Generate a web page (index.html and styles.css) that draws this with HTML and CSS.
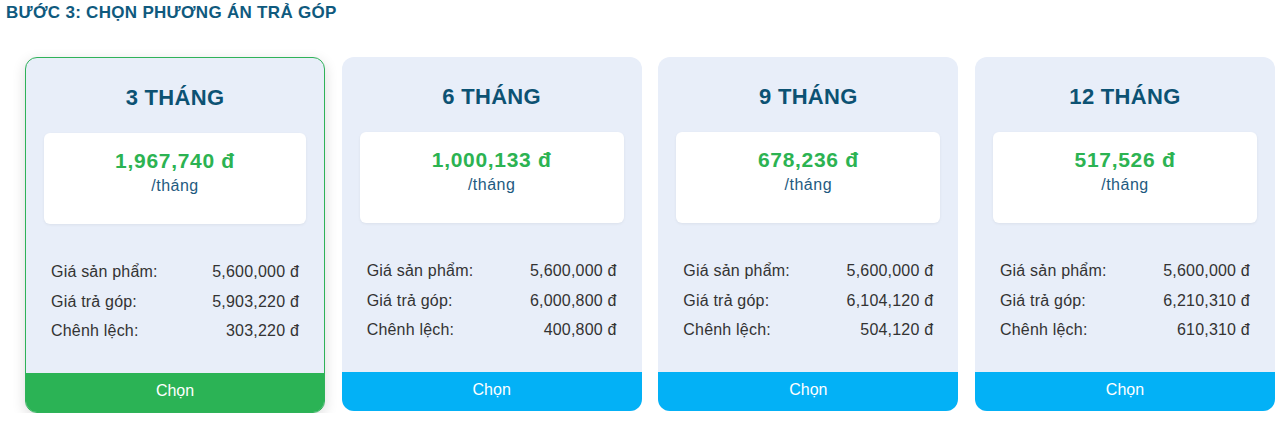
FILE: index.html
```html
<!DOCTYPE html>
<html lang="vi">
<head>
<meta charset="utf-8">
<link rel="stylesheet" href="styles.css">
</head>
<body>
<div class="page">
  <h2 class="step-title">BƯỚC 3: CHỌN PHƯƠNG ÁN TRẢ GÓP</h2>
  <div class="plans">
    <div class="plan plan--selected">
      <div class="plan-term">3 THÁNG</div>
      <div class="plan-price">
        <div class="price">1,967,740 đ</div>
        <div class="per">/tháng</div>
      </div>
      <div class="plan-rows">
        <div class="row"><span>Giá sản phẩm:</span><span>5,600,000 đ</span></div>
        <div class="row"><span>Giá trả góp:</span><span>5,903,220 đ</span></div>
        <div class="row"><span>Chênh lệch:</span><span>303,220 đ</span></div>
      </div>
      <div class="plan-btn">Chọn</div>
    </div>
    <div class="plan">
      <div class="plan-term">6 THÁNG</div>
      <div class="plan-price">
        <div class="price">1,000,133 đ</div>
        <div class="per">/tháng</div>
      </div>
      <div class="plan-rows">
        <div class="row"><span>Giá sản phẩm:</span><span>5,600,000 đ</span></div>
        <div class="row"><span>Giá trả góp:</span><span>6,000,800 đ</span></div>
        <div class="row"><span>Chênh lệch:</span><span>400,800 đ</span></div>
      </div>
      <div class="plan-btn">Chọn</div>
    </div>
    <div class="plan">
      <div class="plan-term">9 THÁNG</div>
      <div class="plan-price">
        <div class="price">678,236 đ</div>
        <div class="per">/tháng</div>
      </div>
      <div class="plan-rows">
        <div class="row"><span>Giá sản phẩm:</span><span>5,600,000 đ</span></div>
        <div class="row"><span>Giá trả góp:</span><span>6,104,120 đ</span></div>
        <div class="row"><span>Chênh lệch:</span><span>504,120 đ</span></div>
      </div>
      <div class="plan-btn">Chọn</div>
    </div>
    <div class="plan">
      <div class="plan-term">12 THÁNG</div>
      <div class="plan-price">
        <div class="price">517,526 đ</div>
        <div class="per">/tháng</div>
      </div>
      <div class="plan-rows">
        <div class="row"><span>Giá sản phẩm:</span><span>5,600,000 đ</span></div>
        <div class="row"><span>Giá trả góp:</span><span>6,210,310 đ</span></div>
        <div class="row"><span>Chênh lệch:</span><span>610,310 đ</span></div>
      </div>
      <div class="plan-btn">Chọn</div>
    </div>
  </div>
</div>
</body>
</html>
```
FILE: styles.css
```css
* { box-sizing: border-box; }
html, body { margin: 0; padding: 0; background: #ffffff; }
body { font-family: "Liberation Sans", Arial, sans-serif; color: #333; }
.page { padding: 4px 6px 0 6px; }
.step-title {
  margin: 0;
  font-size: 17px;
  line-height: 18px;
  font-weight: bold;
  letter-spacing: 0.3px;
  color: #0f5a7e;
}
.plans {
  display: grid;
  grid-template-columns: repeat(4, 300px);
  column-gap: 16.67px;
  align-items: start;
  margin: 35px 0 0 19px;
}
.plan {
  background: #e8eef9;
  border-radius: 12px;
  display: flex;
  flex-direction: column;
  overflow: hidden;
  padding-top: 27px;
}
.plan--selected {
  border: 1px solid #2fb259;
  box-shadow: 0 4px 14px rgba(0, 0, 0, 0.14);
}
.plan-term {
  text-align: center;
  font-size: 22px;
  line-height: 26px;
  font-weight: bold;
  letter-spacing: 0.3px;
  color: #0c5273;
}
.plan-price {
  margin: 22px 18px 0 18px;
  height: 91px;
  background: #ffffff;
  border-radius: 6px;
  box-shadow: 0 1px 3px rgba(0, 0, 0, 0.06);
  text-align: center;
  padding-top: 16px;
}
.price {
  font-size: 21px;
  line-height: 24px;
  font-weight: bold;
  letter-spacing: 0.7px;
  color: #2cb352;
}
.per {
  margin-top: 3px;
  font-size: 16px;
  line-height: 20px;
  letter-spacing: 0.5px;
  color: #1e5a80;
}
.plan-rows {
  margin-top: 33px;
  padding: 0 25px;
}
.row {
  display: flex;
  justify-content: space-between;
  font-size: 16px;
  line-height: 29.5px;
  letter-spacing: 0.2px;
  color: #333;
}
.plan-btn {
  margin-top: 27px;
  height: 39px;
  line-height: 35px;
  text-align: center;
  font-size: 16px;
  color: #ffffff;
  background: #03b1f6;
}
.plan--selected .plan-btn { background: #2bb355; line-height: 36px; }
```
